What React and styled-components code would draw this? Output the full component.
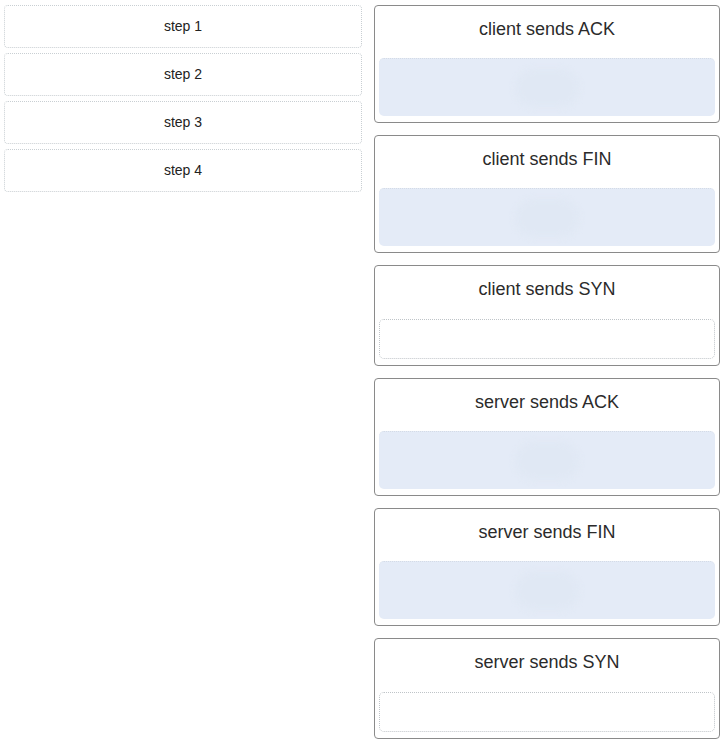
import React from "react";
import styled, { createGlobalStyle } from "styled-components";

const Global = createGlobalStyle`
  html, body { margin: 0; padding: 0; background: #ffffff; }
  body { font-family: "Liberation Sans", Arial, sans-serif; color: #333; }
`;

const Page = styled.div`
  display: grid;
  grid-template-columns: 358px 346px;
  column-gap: 12px;
  align-items: start;
  padding: 5px 7px 4px 4px;
`;

const StepList = styled.div`
  display: flex;
  flex-direction: column;
  gap: 5px;
`;

const Step = styled.div`
  height: 43px;
  box-sizing: border-box;
  padding-bottom: 2px;
  border: 1px dotted #c9cfd3;
  border-radius: 4px;
  display: flex;
  align-items: center;
  justify-content: center;
  font-size: 14px;
  color: #222;
  background: #fff;
`;

const CardList = styled.div`
  display: flex;
  flex-direction: column;
  gap: 12px;
`;

const Card = styled.div`
  box-sizing: border-box;
  border: 1px solid #8a8a8a;
  border-radius: 4px;
  padding: 13px 4px 6px;
  display: flex;
  flex-direction: column;
  background: #fff;
`;

const Title = styled.div`
  font-size: 18px;
  line-height: 21px;
  text-align: center;
  color: #2b2b2b;
  margin-bottom: ${(p) => (p.$filled ? "18px" : "19px")};
`;

const Zone = styled.div`
  height: ${(p) => (p.$filled ? "58px" : "40px")};
  box-sizing: border-box;
  border-radius: 5px;
  display: flex;
  align-items: center;
  justify-content: center;
  background: ${(p) => (p.$filled ? "#e4ebf7" : "#ffffff")};
  border: ${(p) => (p.$filled ? "none" : "1px dotted #bfc4c8")};
  border-top: ${(p) => (p.$filled ? "1px dotted #d4dbe6" : "1px dotted #bfc4c8")};
`;

const Ghost = styled.div`
  width: 64px;
  height: 38px;
  border-radius: 20px;
  background: #e0e8f4;
  filter: blur(3px);
`;

const steps = ["step 1", "step 2", "step 3", "step 4"];
const cards = [
  { t: "client sends ACK", f: true },
  { t: "client sends FIN", f: true },
  { t: "client sends SYN", f: false },
  { t: "server sends ACK", f: true },
  { t: "server sends FIN", f: true },
  { t: "server sends SYN", f: false },
];

export default function App() {
  return (
    <>
      <Global />
      <Page>
        <StepList>
          {steps.map((s) => (
            <Step key={s}>{s}</Step>
          ))}
        </StepList>
        <CardList>
          {cards.map((c) => (
            <Card key={c.t}>
              <Title $filled={c.f}>{c.t}</Title>
              <Zone $filled={c.f}>{c.f && <Ghost />}</Zone>
            </Card>
          ))}
        </CardList>
      </Page>
    </>
  );
}
